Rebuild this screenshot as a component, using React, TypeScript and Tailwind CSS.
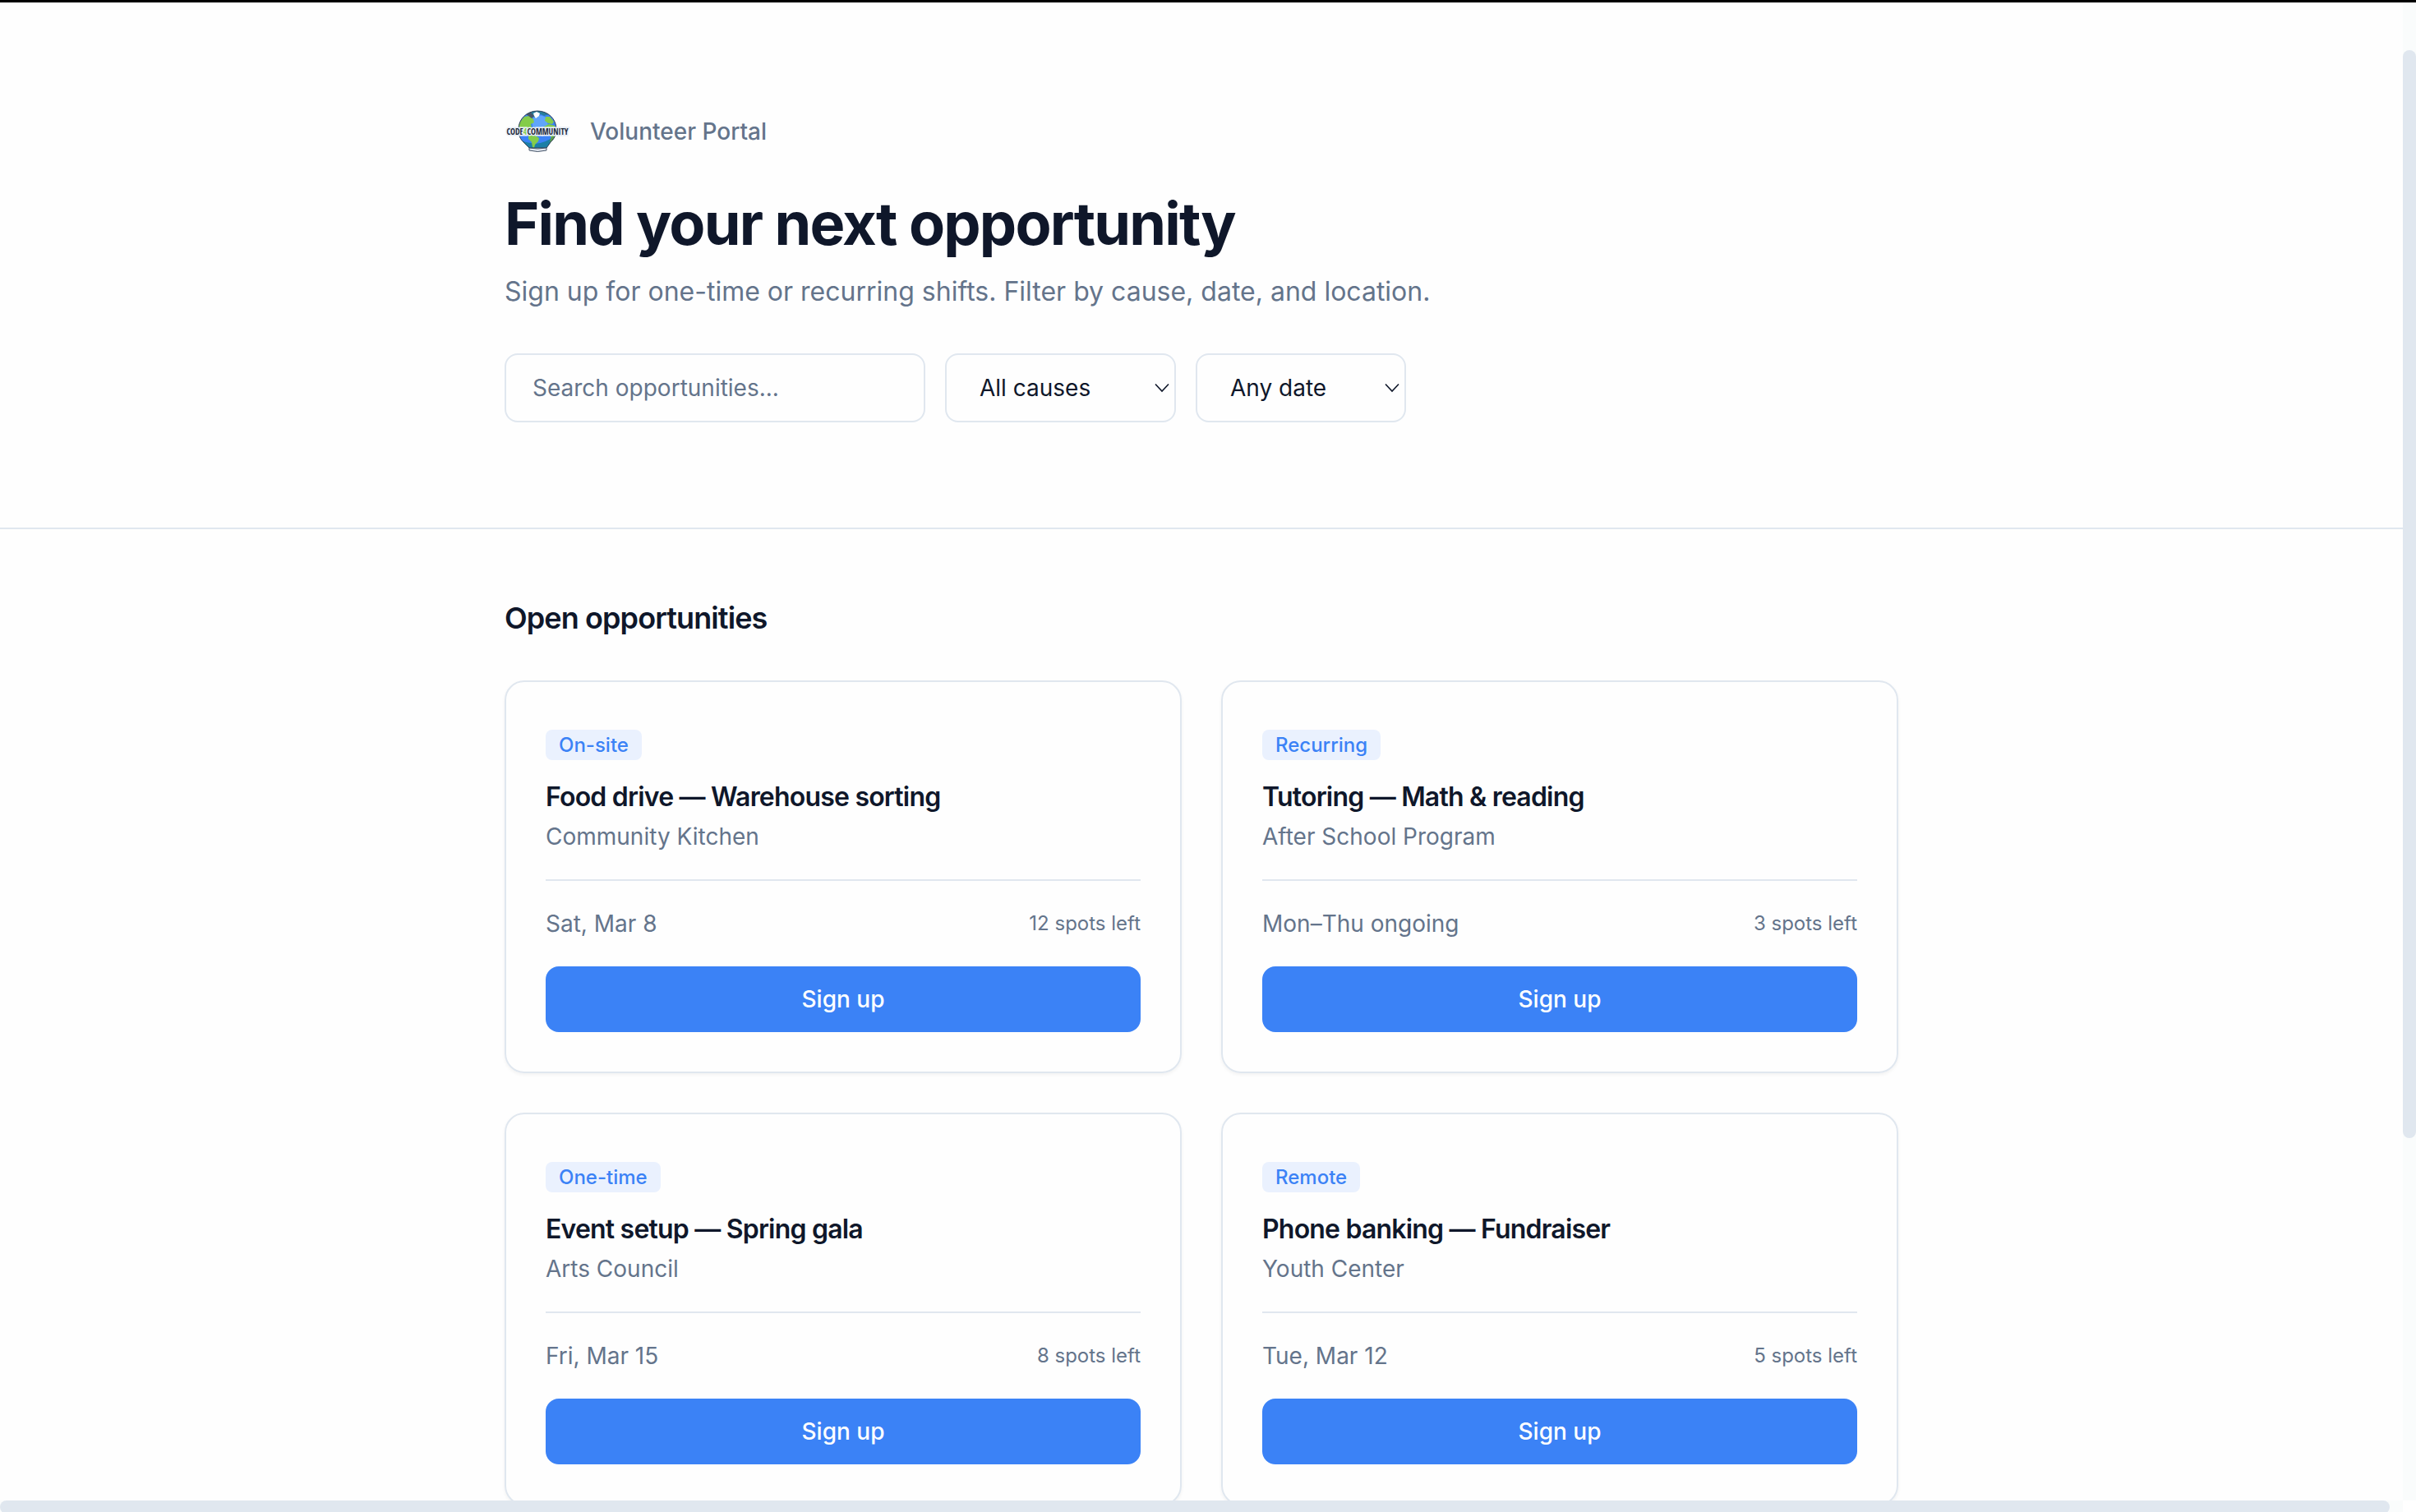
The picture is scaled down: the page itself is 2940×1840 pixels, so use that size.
type Opportunity = {
  tag: string;
  title: string;
  org: string;
  when: string;
  spots: string;
};

const opportunities: Opportunity[] = [
  { tag: "On-site", title: "Food drive — Warehouse sorting", org: "Community Kitchen", when: "Sat, Mar 8", spots: "12 spots left" },
  { tag: "Recurring", title: "Tutoring — Math & reading", org: "After School Program", when: "Mon–Thu ongoing", spots: "3 spots left" },
  { tag: "One-time", title: "Event setup — Spring gala", org: "Arts Council", when: "Fri, Mar 15", spots: "8 spots left" },
  { tag: "Remote", title: "Phone banking — Fundraiser", org: "Youth Center", when: "Tue, Mar 12", spots: "5 spots left" },
];

function Logo() {
  return (
    <svg viewBox="0 0 80 80" className="size-20 shrink-0" role="img" aria-label="Code 4 Community">
      <defs>
        <clipPath id="globe">
          <path d="M40 15C53 15 63 25 63 37C63 45 60 49 56 53L51 60H30L23 53C19 49 17 45 17 37C17 25 27 15 40 15Z" />
        </clipPath>
      </defs>
      <g clipPath="url(#globe)">
        <rect x="12" y="12" width="56" height="54" fill="#3b82f6" />
        <path d="M12 46Q24 54 32 54Q46 58 66 42V66H12Z" fill="#1b7fa6" />
        <path d="M36 22Q46 18 51 24L53 33L46 40L35 37L33 27Z" fill="#60a5fa" />
        <path d="M24 17Q39 11 54 19L48 21L44 19L38 23L30 21Z" fill="#267d9c" />
        <path d="M19 28L24 22L30 21L35 25L36 29L32 31L33 35L26 39L19 39L17 33Z" fill="#84cc4a" />
        <path d="M26 19L32 17L36 21L33 24L29 21Z" fill="#475569" />
        <path d="M50 22L55 22L60 28L58 31L53 30L49 27Z" fill="#84cc4a" />
        <path d="M48 34L54 31L61 33L63 42L59 49L55 45L50 41Z" fill="#84cc4a" />
        <path d="M56 48L61 44L59 51L55 54Z" fill="#5f9d49" />
        <path d="M29 45L36 44L42 48L41 52L37 56L36 60L34 59L33 53L29 49Z" fill="#84cc4a" />
        <path d="M35 18L39 16L43 18L42 21L38 24L36 21Z" fill="#ffffff" />
      </g>
      <path
        d="M40 15C53 15 63 25 63 37C63 45 60 49 56 53L51 60H30L23 53C19 49 17 45 17 37C17 25 27 15 40 15Z"
        fill="none"
        stroke="#334155"
        strokeWidth="1"
      />
      <path d="M30 60Q40 62 51 60L51 63Q40 66 30 63Z" fill="#e2e8f0" stroke="#475569" strokeWidth="1" />
      <text
        x="40"
        y="44"
        textAnchor="middle"
        fill="#1e293b"
        stroke="#e8eef6"
        strokeWidth="3"
        paintOrder="stroke"
        className="font-['Open_Sans_Condensed','Roboto_Condensed',Roboto,sans-serif] text-[10px] font-bold"
      >
        CODE<tspan fill="#84cc4a">4</tspan>COMMUNITY
      </text>
    </svg>
  );
}

function FilterSelect({ label, options, width }: { label: string; options: string[]; width: string }) {
  return (
    <div className={`relative ${width}`}>
      <select
        aria-label={label}
        className="h-[84px] w-full appearance-none rounded-2xl border-2 border-[#e0e7ef] bg-transparent px-10 text-[28px] text-[#0f172a]"
      >
        {options.map((option) => (
          <option key={option}>{option}</option>
        ))}
      </select>
      <svg
        viewBox="0 0 20 12"
        className="pointer-events-none absolute top-1/2 right-[7px] h-3 w-5 -translate-y-1/2"
        fill="none"
        stroke="#0f172a"
        strokeWidth="1.6"
        aria-hidden="true"
      >
        <path d="M2 1.5L10 10L18 1.5" />
      </svg>
    </div>
  );
}

function Card({ tag, title, org, when, spots }: Opportunity) {
  return (
    <article className="flex flex-col rounded-3xl border-2 border-[#e0e7ef] p-12 shadow-[0_2px_4px_rgba(0,0,0,0.05)]">
      <div className="flex h-14 items-center">
        <span className="rounded-lg bg-[#eaf1fe] px-4 py-1 text-[24px] leading-[29px] font-medium text-[#3b82f6]">{tag}</span>
      </div>
      <h3 className="mt-4 text-[32px] leading-10 font-semibold tracking-tight">{title}</h3>
      <p className="mt-2 text-[28px] leading-10 text-[#64748b]">{org}</p>
      <div className="mt-8 flex items-center justify-between border-t-2 border-[#e0e7ef] pt-8 text-[#64748b]">
        <span className="text-[28px] leading-10">{when}</span>
        <span className="text-[24px] leading-8">{spots}</span>
      </div>
      <button type="button" className="mt-8 h-20 rounded-2xl bg-[#3b82f6] text-[28px] font-medium text-white">
        Sign up
      </button>
    </article>
  );
}

export default function App() {
  return (
    <div className="grid h-screen grid-cols-[minmax(0,1fr)_16px] grid-rows-[minmax(0,1fr)_14px] overflow-hidden border-t-[3px] border-black bg-[#fefefe] font-[Inter,sans-serif] text-[#0f172a]">
      <div className="overflow-hidden">
        <header className="border-b-2 border-[#e0e7ef] pt-[117px] pb-32">
          <div className="mx-auto max-w-[1696px]">
            <div className="flex items-center gap-6">
              <Logo />
              <span className="text-[28px] leading-10 font-medium text-[#64748b]">Volunteer Portal</span>
            </div>
            <h1 className="mt-8 text-[72px] leading-20 font-bold tracking-tight">Find your next opportunity</h1>
            <p className="mt-4 text-[32px] leading-[54px] text-[#64748b]">
              Sign up for one-time or recurring shifts. Filter by cause, date, and location.
            </p>
            <div className="mt-12 flex gap-6">
              <input
                type="search"
                aria-label="Search opportunities"
                placeholder="Search opportunities..."
                className="h-[84px] w-[512px] rounded-2xl border-2 border-[#e0e7ef] bg-transparent px-8 text-[28px] placeholder:text-[#64748b]"
              />
              <FilterSelect label="Cause" options={["All causes", "Education", "Food", "Arts"]} width="w-[281px]" />
              <FilterSelect label="Date" options={["Any date", "This week", "This month"]} width="w-[256px]" />
            </div>
          </div>
        </header>
        <main className="mx-auto max-w-[1696px] py-20">
          <h2 className="text-[36px] leading-14 font-semibold tracking-tight">Open opportunities</h2>
          <div className="mt-12 grid grid-cols-2 gap-12">
            {opportunities.map((opportunity) => (
              <Card key={opportunity.title} {...opportunity} />
            ))}
          </div>
        </main>
      </div>
      <div className="flex flex-col bg-[#fafcfc] pt-[58px]" aria-hidden="true">
        <div className="h-3/4 rounded-full bg-[#e0e7ef]" />
      </div>
      <div className="overflow-hidden bg-[#fafcfc] pr-4" aria-hidden="true">
        <div className="h-4 rounded-full bg-[#e0e7ef]" />
      </div>
      <div className="bg-white" />
    </div>
  );
}
